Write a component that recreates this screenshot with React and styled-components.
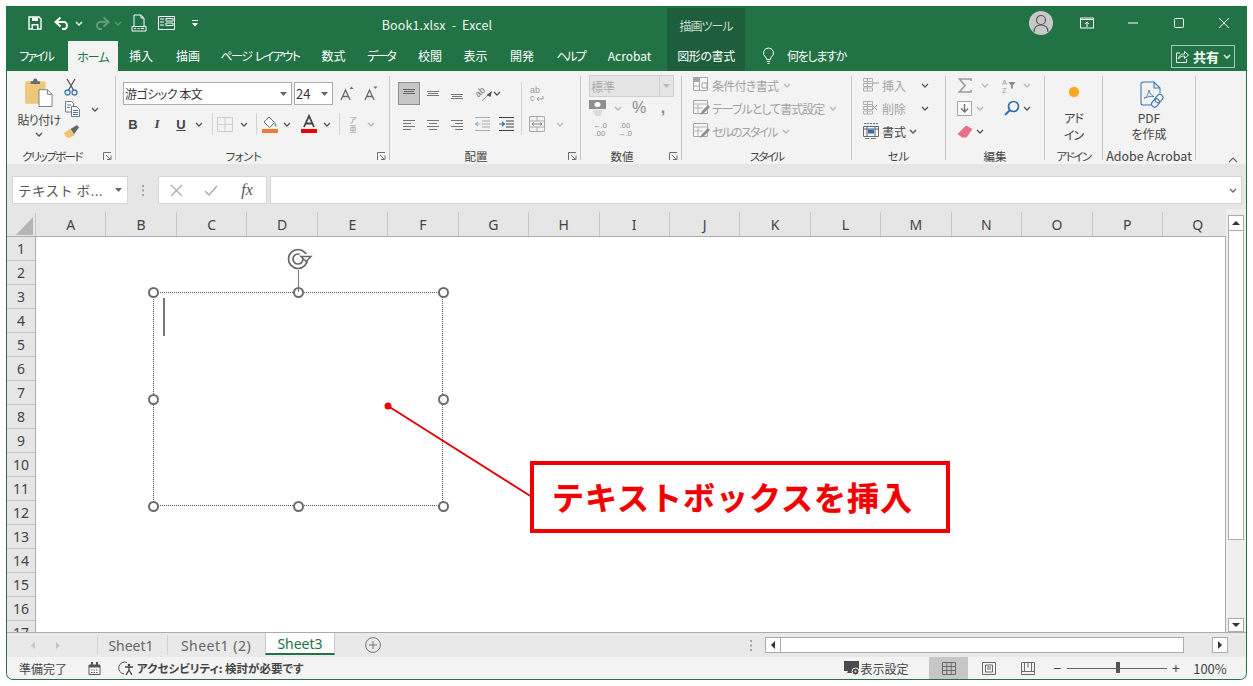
import React from 'react';
import styled, { createGlobalStyle } from 'styled-components';

const Global = createGlobalStyle`
  html, body { margin: 0; padding: 0; background: #fff; }
  body {
    font-family: "Noto Sans CJK JP", "Noto Sans", "Liberation Sans", sans-serif;
    font-feature-settings: "palt";
    color: #444;
    font-size: 12px;
  }
  svg { display: block; overflow: visible; }
`;

const Window = styled.div`
  margin: 6px 0 0 6px;
  width: 1241px;
  height: 674px;
  box-sizing: border-box;
  border: 1px solid #217346;
  border-top: none;
  border-radius: 0 0 7px 7px;
  overflow: hidden;
  display: flex;
  flex-direction: column;
  background: #e6e6e6;
`;

/* a cell of fixed width that centres its icon or text, margin is the gap to the previous one */
const Slot = styled.div`
  flex: none;
  width: ${p => p.$w}px;
  margin-left: ${p => p.$ml || 0}px;
  display: flex;
  align-items: center;
  justify-content: center;
  white-space: nowrap;
`;

const TitleBar = styled.div`
  height: 34px;
  flex: none;
  background: #217346;
  display: flex;
  align-items: center;
  color: #fff;
`;
const DocTitle = styled(Slot)`
  font-size: 12.5px;
  color: #eef5f1;
  word-spacing: 3px;
  letter-spacing: 0.15px;
  margin-top: 3px;
`;
const ToolTitle = styled(Slot)`
  align-self: stretch;
  margin-top: 2px;
  padding-top: 2px;
  background: #1d5f3b;
  color: #c9dcd1;
  font-size: 12px;
  letter-spacing: -1px;
`;
const Avatar = styled.div`
  width: 24px;
  height: 24px;
  margin-left: auto;
  border-radius: 50%;
  background: #c8c8c8;
  display: flex;
  align-items: center;
  justify-content: center;
  overflow: hidden;
`;

const TabBar = styled.div`
  height: 31px;
  flex: none;
  background: #217346;
  display: flex;
  align-items: stretch;
  color: #fff;
  font-size: 12px;
`;
const Tab = styled(Slot)`
  background: ${p => (p.$active ? '#f3f3f3' : p.$dark ? '#1d5f3b' : 'transparent')};
  color: ${p => (p.$active ? '#217346' : '#fff')};
  margin-top: ${p => (p.$active ? 1 : 0)}px;
  letter-spacing: ${p => p.$ls || 0}px;
  word-spacing: 2px;
`;
const ShareButton = styled.div`
  margin: 5px 11px 3px auto;
  width: 64px;
  box-sizing: border-box;
  border: 1px solid #a9c9b7;
  display: flex;
  align-items: center;
  justify-content: center;
  gap: 4px;
  font-weight: 700;
  font-size: 13px;
`;

const Ribbon = styled.div`
  height: 93px;
  flex: none;
  box-sizing: border-box;
  padding: 5px 0 4px;
  background: #f3f3f3;
  display: flex;
`;
const Group = styled.div`
  flex: none;
  width: ${p => p.$w}px;
  box-sizing: border-box;
  border-right: 1px solid #c4c4c4;
  display: flex;
  flex-direction: column;
`;
const GroupBody = styled.div`
  flex: 1;
  min-height: 0;
  display: flex;
  flex-direction: ${p => p.$dir || 'column'};
  align-items: ${p => p.$align || 'stretch'};
`;
const GroupLabel = styled.div`
  height: 14px;
  margin-bottom: -3px;
  display: flex;
  align-items: center;
  font-size: ${p => p.$size || 11.5}px;
  letter-spacing: ${p => p.$ls || 0}px;
  line-height: 14px;
  color: #444;
  white-space: nowrap;
`;
const LabelText = styled.div`
  flex: 1;
  text-align: center;
`;
const Launcher = styled.div`
  width: 18px;
  flex: none;
  display: flex;
  justify-content: flex-end;
  padding-right: 3px;
  box-sizing: border-box;
`;
const Row = styled.div`
  display: flex;
  align-items: center;
  flex: none;
  height: ${p => p.$h}px;
  margin-top: ${p => p.$mt || 0}px;
  margin-left: ${p => p.$ml || 0}px;
`;
const Col = styled.div`
  display: flex;
  flex-direction: column;
  flex: none;
  width: ${p => (p.$w ? p.$w + 'px' : 'auto')};
  margin-left: ${p => p.$ml || 0}px;
  align-items: ${p => p.$align || 'stretch'};
`;
const ComboBox = styled.div`
  flex: none;
  box-sizing: border-box;
  width: ${p => p.$w}px;
  margin-left: ${p => p.$ml || 0}px;
  height: 23px;
  background: #fff;
  border: 1px solid #ababab;
  display: flex;
  align-items: center;
  justify-content: space-between;
  padding: 0 4px 0 1px;
  font-size: ${p => p.$size || 12}px;
  letter-spacing: ${p => p.$ls || 0}px;
  color: #333;
  white-space: nowrap;
`;
const ActiveToggle = styled(Slot)`
  height: 23px;
  box-sizing: border-box;
  background: #c6c6c6;
  border: 1px solid #8f8f8f;
`;
const RowSep = styled.div`
  flex: none;
  width: 1px;
  height: ${p => p.$h || 22}px;
  background: #d2d2d2;
  margin-left: ${p => p.$ml || 0}px;
`;
const FmtLetter = styled(Slot)`
  font-family: ${p => (p.$serif ? '"Liberation Serif", serif' : '"Liberation Sans", sans-serif')};
  font-weight: 700;
  font-style: ${p => (p.$italic ? 'italic' : 'normal')};
  text-decoration: ${p => (p.$under ? 'underline' : 'none')};
  font-size: 13px;
  color: #444;
`;
const NumberSelect = styled.div`
  margin: -1px 0 0 8px;
  width: 85px;
  height: 22px;
  flex: none;
  box-sizing: border-box;
  background: #e5e5e5;
  border: 1px solid #cfcfcf;
  color: #ababab;
  display: flex;
  align-items: center;
  justify-content: space-between;
  font-size: 12px;
  padding-left: 1px;
`;
const SelectArrow = styled.div`
  width: 13px;
  align-self: stretch;
  border-left: 1px solid #cfcfcf;
  display: flex;
  align-items: center;
  justify-content: center;
`;
const Glyph = styled(Slot)`
  font-family: "Liberation Sans", sans-serif;
  font-size: ${p => p.$size || 15}px;
  font-weight: ${p => (p.$bold ? 700 : 400)};
  color: #8a8a8a;
`;
const Phonetic = styled(Slot)`
  flex-direction: column;
  font-size: 7.5px;
  line-height: 9px;
  color: #a0a0a0;
`;
const TinyNum = styled(Slot)`
  flex-direction: column;
  font-family: "Liberation Sans", sans-serif;
  font-size: 7.5px;
  line-height: 8px;
  color: #8e8e8e;
`;
const ListItem = styled.div`
  display: flex;
  align-items: center;
  height: 22px;
  margin-top: ${p => p.$mt || 0}px;
  padding-left: ${p => p.$pl}px;
  color: ${p => (p.$dim ? '#a3a3a3' : '#444')};
  font-size: 12px;
  white-space: nowrap;
`;
const ItemText = styled.span`
  margin-left: ${p => p.$ml || 2}px;
  margin-right: ${p => p.$mr || 0}px;
  width: ${p => (p.$w ? p.$w + 'px' : 'auto')};
  letter-spacing: ${p => p.$ls || 0}px;
  flex: none;
`;
const BigLabel = styled.div`
  font-size: 12px;
  line-height: ${p => p.$lh || 16}px;
  letter-spacing: ${p => p.$ls || 0}px;
  text-align: center;
  color: #444;
  white-space: nowrap;
  margin-top: ${p => p.$mt || 0}px;
`;
const OrangeDot = styled.div`
  width: 10px;
  height: 10px;
  border-radius: 50%;
  background: #f7a823;
  box-shadow: 0 0 2px #f9c56c;
  margin-top: 11px;
`;
const Collapse = styled.div`
  margin: auto 8px -3px auto;
`;

const FormulaBar = styled.div`
  height: 45px;
  flex: none;
  box-sizing: border-box;
  padding: 12px 0 5px 5px;
  background: #e6e6e6;
  display: flex;
  align-items: stretch;
`;
const NameBox = styled.div`
  width: 116px;
  flex: none;
  box-sizing: border-box;
  background: #fff;
  border: 1px solid #d4d4d4;
  display: flex;
  align-items: center;
  justify-content: space-between;
  padding: 0 5px 0 5px;
  font-size: 13.5px;
  font-feature-settings: normal;
  letter-spacing: 0.4px;
  color: #555;
  white-space: nowrap;
`;
const FxBox = styled.div`
  width: 109px;
  flex: none;
  margin-left: 14px;
  box-sizing: border-box;
  background: #fff;
  border: 1px solid #d4d4d4;
  display: flex;
  align-items: center;
`;
const FxLetter = styled(Slot)`
  font-family: "Liberation Serif", serif;
  font-style: italic;
  font-size: 16px;
  color: #555;
`;
const FormulaInput = styled.div`
  width: 972px;
  flex: none;
  margin-left: 3px;
  box-sizing: border-box;
  background: #fff;
  border: 1px solid #d4d4d4;
  display: flex;
  align-items: center;
  justify-content: flex-end;
  padding-right: 4px;
`;

const Main = styled.div`
  height: 423px;
  flex: none;
  display: flex;
`;
const SheetArea = styled.div`
  flex: 1;
  min-width: 0;
  display: flex;
  flex-direction: column;
`;
const ColHeader = styled.div`
  height: 28px;
  flex: none;
  box-sizing: border-box;
  display: flex;
  overflow: hidden;
  border-bottom: 1px solid #ababab;
  background: #e6e6e6;
`;
const Corner = styled.div`
  width: 29px;
  flex: none;
  box-sizing: border-box;
  border-right: 1px solid #c6c6c6;
  margin-top: 4px;
  padding: 4px 3px 1px 9px;
`;
const ColCell = styled.div`
  width: 70.45px;
  flex: none;
  box-sizing: border-box;
  border-right: 1px solid #c6c6c6;
  margin-top: 3px;
  display: flex;
  align-items: center;
  justify-content: center;
  font-family: "Noto Sans", sans-serif;
  font-size: 14px;
  color: #444;
`;
const SheetBody = styled.div`
  flex: 1;
  min-height: 0;
  display: flex;
`;
const RowHeader = styled.div`
  width: 29px;
  flex: none;
  overflow: hidden;
  box-sizing: border-box;
  border-right: 1px solid #ababab;
`;
const RowCell = styled.div`
  height: 24px;
  flex: none;
  box-sizing: border-box;
  border-bottom: 1px solid #c6c6c6;
  display: flex;
  align-items: center;
  justify-content: center;
  font-family: "Noto Sans", sans-serif;
  font-size: 14px;
  color: #444;
`;
const Canvas = styled.div`
  flex: 1;
  min-width: 0;
  position: relative;
  background: #fff;
  border-right: 1px solid #ababab;
`;
const TextBox = styled.div`
  position: absolute;
  left: 117px;
  top: 55px;
  width: 290px;
  height: 214px;
`;
const TextBoxFrame = styled.div`
  position: absolute;
  inset: 0;
  border: 1px dotted #555;
`;
const Handle = styled.div`
  position: absolute;
  left: ${p => p.$x}%;
  top: ${p => p.$y}%;
  width: 11px;
  height: 11px;
  margin: -5.5px 0 0 -5.5px;
  border: 2px solid #6b6b6b;
  border-radius: 50%;
  background: #fff;
  box-sizing: border-box;
`;
const Caret = styled.div`
  position: absolute;
  left: 10px;
  top: 6px;
  width: 1.5px;
  height: 38px;
  background: #777;
`;
const RotateHandle = styled.div`
  position: absolute;
  left: 132px;
  top: -44px;
`;
const Overlay = styled.svg`
  position: absolute;
  left: 0;
  top: 0;
  pointer-events: none;
`;
const Callout = styled.div`
  position: absolute;
  left: 494px;
  top: 224px;
  width: 420px;
  height: 72px;
  box-sizing: border-box;
  border: 4px solid #f00000;
  background: #fff;
  color: #f00000;
  font-size: 32px;
  font-weight: 700;
  font-feature-settings: normal;
  letter-spacing: 1px;
  -webkit-text-stroke: 0.3px #f00000;
  white-space: nowrap;
  display: flex;
  align-items: center;
  padding: 0 0 2px 18px;
`;
const VScroll = styled.div`
  width: 20px;
  flex: none;
  display: flex;
  flex-direction: column;
  align-items: center;
  padding-top: 6px;
  box-sizing: border-box;
  background: #efefef;
`;
const ScrollBtn = styled.div`
  width: 16px;
  height: ${p => p.$h || 16}px;
  flex: none;
  box-sizing: border-box;
  background: #fff;
  border: 1px solid #ababab;
  display: flex;
  align-items: center;
  justify-content: center;
  margin-left: ${p => p.$ml || 0}px;
`;
const VThumb = styled.div`
  width: 16px;
  height: 309px;
  flex: none;
  margin-bottom: 78px;
  box-sizing: border-box;
  background: #fff;
  border: 1px solid #ababab;
  border-top: none;
`;

const SheetStrip = styled.div`
  height: 25px;
  flex: none;
  box-sizing: border-box;
  border-top: 1px solid #ababab;
  background: #e9e9e9;
  display: flex;
  align-items: center;
  font-size: 14px;
  font-family: "Noto Sans", sans-serif;
`;
const SheetTab = styled(Slot)`
  color: ${p => (p.$active ? '#217346' : '#666')};
  letter-spacing: ${p => p.$ls || 0}px;
  ${p => p.$active && `
    align-self: stretch;
    background: #fff;
    margin-bottom: 2px;
    border-bottom: 2px solid #217346;
    border-left: 1px solid #c6c6c6;
    border-right: 1px solid #c6c6c6;
    box-sizing: border-box;
  `}
`;
const HTrack = styled.div`
  width: 403px;
  height: 16px;
  flex: none;
  box-sizing: border-box;
  background: #fff;
  border: 1px solid #ababab;
  border-left: none;
`;
const StatusBar = styled.div`
  height: 22px;
  flex: none;
  background: #f3f3f3;
  display: flex;
  align-items: stretch;
  font-size: 12px;
  color: #444;
`;
const StatusItem = styled(Slot)`
  font-weight: ${p => (p.$bold ? 700 : 400)};
  justify-content: ${p => (p.$left ? 'flex-start' : 'center')};
  margin-left: ${p => (p.$auto ? 'auto' : (p.$ml || 0) + 'px')};
  background: ${p => (p.$active ? '#c6c6c6' : 'transparent')};
  font-size: ${p => p.$size || 12}px;
`;
const ZoomSlider = styled(Slot)`
  position: relative;
`;
const ZoomLine = styled.div`
  width: 100%;
  height: 1px;
  background: #666;
`;
const ZoomThumb = styled.div`
  position: absolute;
  left: 49px;
  top: 50%;
  width: 4px;
  height: 11px;
  margin-top: -6px;
  background: #555;
`;

const Chev = ({ c = '#555' }) => (
  <svg width="8" height="5" viewBox="0 0 8 5"><path d="M1 1l3 3 3-3" fill="none" stroke={c} strokeWidth="1.3" /></svg>
);
const Tri = ({ c = '#555' }) => (
  <svg width="7" height="4" viewBox="0 0 7 4"><path d="M0 0h7L3.5 4z" fill={c} /></svg>
);
const Lines = ({ kind, c = '#777' }) => {
  const rows = {
    top: [[1, 13, 2], [2, 12, 4], [1, 13, 6]],
    mid: [[1, 13, 4], [2, 12, 6], [1, 13, 8]],
    bot: [[1, 13, 7], [2, 12, 9], [1, 13, 11]],
    left: [[1, 13, 2], [1, 9, 5], [1, 13, 8], [1, 9, 11]],
    center: [[1, 13, 2], [3, 11, 5], [1, 13, 8], [3, 11, 11]],
    right: [[1, 13, 2], [5, 13, 5], [1, 13, 8], [5, 13, 11]],
  }[kind];
  return (
    <svg width="14" height="13" viewBox="0 0 14 13">
      {rows.map((r, i) => <path key={i} d={`M${r[0]} ${r[2] + 0.5}H${r[1]}`} stroke={c} strokeWidth="1" />)}
    </svg>
  );
};
const SaveIcon = () => (
  <svg width="16" height="16" viewBox="0 0 16 16"><path d="M2 2h10l2 2v10H2z" fill="none" stroke="#fff" strokeWidth="1.4" /><path d="M5 2.5h6v3.5H5zM4.500 9h7v5h-7z" fill="#fff" /><path d="M6 10.500h4v3.500H6z" fill="#217346" /></svg>
);
const UndoIcon = ({ c = '#fff' }) => (
  <svg width="18" height="13" viewBox="0 0 18 13"><path d="M2 5h9a4 4 0 0 1 0 7H8" fill="none" stroke={c} strokeWidth="2" /><path d="M6.500 0.500L1.500 5l5 4.500" fill="none" stroke={c} strokeWidth="2" /></svg>
);
const RedoIcon = () => (
  <svg width="18" height="13" viewBox="0 0 18 13"><path d="M16 5H7a4 4 0 0 0 0 7h3" fill="none" stroke="#5f9d7d" strokeWidth="2" /><path d="M11.500 0.500l5 4.500-5 4.500" fill="none" stroke="#5f9d7d" strokeWidth="2" /></svg>
);
const PrintPreview = () => (
  <svg width="16" height="18" viewBox="0 0 16 18"><path d="M3 12V1h7l3 3v8M10 1v3h3" fill="none" stroke="#fff" /><path d="M1 12.500h14v4.500H1z" fill="none" stroke="#fff" /><path d="M3 14.500h2M6.500 14.500h2M10 14.500h3" stroke="#fff" /></svg>
);
const FormIcon = () => (
  <svg width="18" height="14" viewBox="0 0 18 14"><path d="M.5.500h16v13H.500z" fill="none" stroke="#fff" /><path d="M2 3h4M2 6h4M2 9h4M8 2.500h7v2.500H8zM8 7h7v2.500H8z" fill="none" stroke="#fff" /></svg>
);
const QatDrop = () => (
  <svg width="6" height="7" viewBox="0 0 6 7"><path d="M0 0.500h6" stroke="#fff" /><path d="M0 3h6L3 6.500z" fill="#fff" /></svg>
);
const UserIcon = () => (
  <svg width="16" height="18" viewBox="0 0 16 18"><circle cx="8" cy="6" r="4.500" fill="none" stroke="#555" strokeWidth="1.200" /><path d="M1 18c0-5 3-7 7-7s7 2 7 7" fill="none" stroke="#555" strokeWidth="1.200" /></svg>
);
const RibbonDisplay = () => (
  <svg width="14" height="12" viewBox="0 0 14 12"><path d="M.500 1h13v10H.500zM.500 2.500h13" fill="none" stroke="#fff" /><path d="M7 10V5M5 7l2-2 2 2" fill="none" stroke="#fff" /></svg>
);
const WinBtn = ({ kind }) => (
  <svg width="12" height="12" viewBox="0 0 12 12">
    {kind === 'min' && <path d="M1 6h10" stroke="#fff" />}
    {kind === 'max' && <rect x="1.500" y="1.500" width="9" height="9" rx="1" fill="none" stroke="#fff" />}
    {kind === 'close' && <path d="M1 1l10 10M11 1L1 11" stroke="#fff" />}
  </svg>
);
const Bulb = () => (
  <svg width="13" height="17" viewBox="0 0 13 17"><path d="M6.500 1a5 5 0 0 0-3 9c.8.700 1 1.500 1.200 2.500h3.600c.2-1 .4-1.800 1.200-2.500a5 5 0 0 0-3-9z" fill="none" stroke="#fff" /><path d="M5 14.500h3M5.500 16.500h2" stroke="#fff" /></svg>
);
const ShareIcon = () => (
  <svg width="14" height="14" viewBox="0 0 14 14"><path d="M5 3H1.500v9.500h10V9" fill="none" stroke="#fff" /><path d="M3.500 9c.5-4 3-5 6-5V1.500l4 3.500-4 3.500V6c-2.500 0-4.500.5-6 3z" fill="none" stroke="#fff" strokeWidth=".9" /></svg>
);
const PasteIcon = () => (
  <svg width="28" height="29" viewBox="0 0 30 30">
    <rect x="0" y="3" width="22" height="24" rx="1.500" fill="#eec77d" />
    <path d="M6 3h2.500c.3-2 1-3 2.500-3s2.300 1 2.500 3H16v3H6z" fill="#6d6d6d" />
    <path d="M15 12h9l5 5v13H15z" fill="#fff" stroke="#7b7b7b" />
    <path d="M24 12v5h5" fill="none" stroke="#7b7b7b" />
  </svg>
);
const ScissorsIcon = () => (
  <svg width="14" height="18" viewBox="0 0 14 18"><path d="M3 1l6.500 11M11 1L4.500 12" stroke="#555" strokeWidth="1.300" fill="none" /><circle cx="3.500" cy="14.500" r="2.500" fill="none" stroke="#3e76b0" strokeWidth="1.300" /><circle cx="10.500" cy="14.500" r="2.500" fill="none" stroke="#3e76b0" strokeWidth="1.300" /></svg>
);
const CopyIcon = () => (
  <svg width="15" height="16" viewBox="0 0 15 16"><path d="M.500.500h6l2 2V11H.500z" fill="#fff" stroke="#777" /><path d="M6.500 5.500h5l3 3v7h-8z" fill="#fff" stroke="#777" /><path d="M2 4h4M2 6.500h3M8 9.500h5M8 11.500h5M8 13.500h5" stroke="#3e76b0" /></svg>
);
const BrushIcon = () => (
  <svg width="16" height="14" viewBox="0 0 16 14"><path d="M0 8l6-4 5 6-6 3c-2 .5-4-2.500-5-5z" fill="#efc26e" /><path d="M6.500 4L13 0l2 2.500-5 6.500z" fill="#666" /></svg>
);
const LauncherIcon = () => (
  <svg width="9" height="9" viewBox="0 0 9 9"><path d="M.500 8V.500H8M3 3l4.500 4.500M4 7.500h4V3.500" fill="none" stroke="#6f6f6f" /></svg>
);
const BorderIcon = () => (
  <svg width="16" height="15" viewBox="0 0 16 15"><path d="M.500.500h15v14H.500zM8 .500v14M.500 7.500h15" fill="none" stroke="#cdcdcd" /></svg>
);
const FillIcon = () => (
  <svg width="18" height="18" viewBox="0 0 18 18"><path d="M3 7l5-5 5.500 5.500-5 5z" fill="#fff" stroke="#666" /><path d="M14 8c1.500 1.500 2 3 1 3.500S13 10 14 8z" fill="#4a90c4" /><path d="M1 14h16v4H1z" fill="#ed7d31" /></svg>
);
const FontColorIcon = () => (
  <svg width="16" height="18" viewBox="0 0 16 18"><path d="M3 12L8 1l5 11M5 8.500h6" fill="none" stroke="#444" strokeWidth="1.800" /><path d="M0 14h16v4H0z" fill="#f00000" /></svg>
);
const GrowA = ({ up }) => (
  <svg width="14" height="15" viewBox="0 0 14 15"><path d="M1 14L5.500 4 10 14M3 10.500h5" fill="none" stroke="#666" strokeWidth="1.300" /><path d={up ? 'M9.500 3l2-2.500 2 2.500z' : 'M9.500.5h4l-2 2.500z'} fill="#3f78b2" /></svg>
);
const OrientIcon = () => (
  <svg width="18" height="16" viewBox="0 0 18 16">
    <text x="1" y="10" fontFamily="Liberation Sans" fontSize="9" fill="#666" transform="rotate(-40 4 8)">ab</text>
    <path d="M3 12l9-9" stroke="#888" transform="translate(4 3)" />
    <path d="M17 5l-1.500 6-4-2z" fill="#555" />
  </svg>
);
const WrapIcon = () => (
  <svg width="16" height="18" viewBox="0 0 16 18">
    <text x="1" y="7.500" fontFamily="Liberation Sans" fontSize="9" fill="#9a9a9a">ab</text>
    <text x="1" y="16" fontFamily="Liberation Sans" fontSize="9" fill="#9a9a9a">c</text>
    <path d="M14 11v3H8m2-2l-2 2 2 2" fill="none" stroke="#9a9a9a" />
  </svg>
);
const IndentIcon = ({ dir, c, active }) => (
  <svg width="16" height="14" viewBox="0 0 16 14">
    <path d="M1 .500h15M8 4h8M8 7h8M8 10h8M1 13.500h15" stroke={active ? '#444' : '#aaa'} />
    <path d={dir > 0 ? 'M1 7h5M4 5l2.500 2L4 9' : 'M6.500 7h-5M4 5L1.500 7 4 9'} fill="none" stroke={c} strokeWidth="1.200" />
  </svg>
);
const MergeIcon = () => (
  <svg width="16" height="16" viewBox="0 0 16 16"><path d="M.500.500h15v15H.500zM.500 5h15M.500 11h15M8 .500V5M8 11v4.500" fill="none" stroke="#aaa" /><path d="M3 8h10M5 6.500L3 8l2 1.500M11 6.500L13 8l-2 1.500" fill="none" stroke="#888" /></svg>
);
const CurrencyIcon = () => (
  <svg width="18" height="17" viewBox="0 0 18 17"><path d="M0 0h17v9H0z" fill="#8f8f8f" /><ellipse cx="8.500" cy="4.500" rx="3" ry="2.500" fill="#fff" /><path d="M4 11h10M5 13h8M6 15h6" stroke="#c6c6c6" /></svg>
);
const StyleIcon = ({ kind }) => (
  <svg width="17" height="16" viewBox="0 0 17 16">
    <path d="M.500.500h14v13H.500z" fill="#f6f6f6" stroke="#a6a6a6" />
    {kind === 'cond' ? (
      <path d="M.500 4.500h6M.500 9h6M6.500.500v13M9 6h5v5H9z" fill="none" stroke="#a6a6a6" />
    ) : (
      <path d="M.500 4h14M.500 8h9M5 4v9" fill="none" stroke="#b5b5b5" />
    )}
    {kind !== 'cond' && <path d="M7 15l2-4 6-6 2 2-6 6z" fill="#8f8f8f" />}
    {kind === 'cond' && <path d="M.500 .500h6v4h-6z" fill="#a6a6a6" />}
  </svg>
);
const CellIcon = ({ kind }) => (
  <svg width="17" height="16" viewBox="0 0 17 16">
    {kind === 'format' ? (
      <>
        <path d="M.500 3.500h15v10H.500zM.500 6h15M4 3.500v10M12 3.500v10" fill="none" stroke="#6b6b6b" />
        <path d="M1 .500h14" stroke="#3e76b0" strokeDasharray="2 1" />
        <path d="M5 6.500h6v4H5z" fill="#2f6fb0" />
        <path d="M2 15.500h4M8 15.500h5" stroke="#777" />
      </>
    ) : (
      <>
        <path d="M.500 1.500h9v3h-9zM.500 6.500h9v3h-9zM.500 11h9v3h-9zM4.500 1.500v12" fill="none" stroke="#b0b0b0" />
        {kind === 'del'
          ? <path d="M9 5l5 5M14 5l-5 5" stroke="#9a9a9a" />
          : <path d="M9 6h7" stroke="#9a9a9a" />}
      </>
    )}
  </svg>
);
const SigmaIcon = () => (
  <svg width="14" height="15" viewBox="0 0 14 15"><path d="M13 3V1H1.500l5.500 6.500L1.500 14H13v-2" fill="none" stroke="#9a9a9a" strokeWidth="1.600" /></svg>
);
const SortIcon = () => (
  <svg width="14" height="15" viewBox="0 0 14 15">
    <text x="0" y="6.500" fontFamily="Liberation Sans" fontSize="7.500" fill="#9a9a9a">A</text>
    <text x="0" y="14.500" fontFamily="Liberation Sans" fontSize="7.500" fill="#9a9a9a">Z</text>
    <path d="M6.500 4h7L10.800 7.500V11L9 10V7.500z" fill="#8a8a8a" />
  </svg>
);
const FillDownIcon = () => (
  <svg width="15" height="15" viewBox="0 0 15 15"><path d="M.500.500h14v14H.500z" fill="#fafafa" stroke="#a6a6a6" /><path d="M7.500 3v8M4 7.500l3.500 3.500L11 7.500" fill="none" stroke="#777" strokeWidth="1.500" /></svg>
);
const FindIcon = () => (
  <svg width="16" height="16" viewBox="0 0 16 16"><circle cx="9.500" cy="6.500" r="5" fill="none" stroke="#2f6fb0" strokeWidth="1.700" /><path d="M6 10l-5 5" stroke="#2f6fb0" strokeWidth="2" /></svg>
);
const EraserIcon = () => (
  <svg width="16" height="13" viewBox="0 0 16 13"><path d="M9 .500L15.500 4l-6 8.500H5L.500 9z" fill="#e8718a" /></svg>
);
const AcrobatIcon = () => (
  <svg width="26" height="28" viewBox="0 0 26 28" fill="none" stroke="#3e76b0" strokeWidth="1.100">
    <path d="M11 24H3a2 2 0 0 1-2-2V3a2 2 0 0 1 2-2h11l6 6v5" />
    <path d="M14 1v6h6" />
    <path d="M4 17c2 0 4-3 5-8 .5 3 2.500 6 5 6.500-3-.5-7 .500-10 1.500z" strokeWidth=".9" />
    <rect x="16" y="13" width="6" height="9" rx="3" transform="rotate(40 19 17.500)" />
    <rect x="12.500" y="17.500" width="6" height="9" rx="3" transform="rotate(40 15.500 22)" />
  </svg>
);
const XMark = () => (
  <svg width="13" height="13" viewBox="0 0 13 13"><path d="M1 1l11 11M12 1L1 12" stroke="#ababab" strokeWidth="1.300" /></svg>
);
const CheckMark = () => (
  <svg width="14" height="11" viewBox="0 0 14 11"><path d="M1 6l4 4 8-9" fill="none" stroke="#ababab" strokeWidth="1.500" /></svg>
);
const Dots = ({ c = '#a6a6a6' }) => (
  <svg width="2" height="11" viewBox="0 0 2 11"><path d="M0 0h2v2H0zM0 4.500h2v2H0zM0 9h2v2H0z" fill={c} /></svg>
);
const ArrowBtn = ({ dir }) => (
  <svg width="8" height="8" viewBox="0 0 8 8">
    {dir === 'up' && <path d="M0 6h8L4 2z" fill="#333" />}
    {dir === 'down' && <path d="M0 2h8L4 6z" fill="#333" />}
    {dir === 'left' && <path d="M6 0v8L2 4z" fill="#333" />}
    {dir === 'right' && <path d="M2 0v8l4-4z" fill="#333" />}
  </svg>
);
const PlusCircle = () => (
  <svg width="16" height="16" viewBox="0 0 16 16"><circle cx="8" cy="8" r="7.400" fill="none" stroke="#777" /><path d="M8 4v8M4 8h8" stroke="#777" /></svg>
);
const MacroIcon = () => (
  <svg width="13" height="13" viewBox="0 0 13 13"><path d="M1 3h11v9.500H1z" fill="#fff" stroke="#555" /><path d="M1 3h11v2.500H1zM3 0h2v3H3zM8 0h2v3H8z" fill="#555" /><path d="M3 8h7M3 10.500h7" stroke="#555" strokeDasharray="1.500 1" /></svg>
);
const AccessIcon = () => (
  <svg width="16" height="15" viewBox="0 0 16 15"><path d="M5 13A6 6 0 1 1 8 1.500" fill="none" stroke="#555" /><circle cx="10" cy="4" r="1.300" fill="#444" /><path d="M6 6h8M10 6v3l-3 5M10 9l3 5" fill="none" stroke="#444" strokeWidth="1.300" /></svg>
);
const DisplayIcon = () => (
  <svg width="16" height="15" viewBox="0 0 16 15"><path d="M0 0h15v10H9v2H3l1-2H0z" fill="#4a4a4a" /><circle cx="11.500" cy="10.500" r="3.500" fill="#4a4a4a" stroke="#f3f3f3" /><circle cx="11.500" cy="10.500" r="1" fill="#f3f3f3" /></svg>
);
const ViewIcon = ({ kind }) => (
  <svg width="14" height="13" viewBox="0 0 14 13">
    {kind === 'normal' && <path d="M.500.500h13v12H.500zM.500 4.500h13M.500 8.500h13M4.800.500v12M9.200.500v12" fill="none" stroke="#6b6b6b" />}
    {kind === 'page' && <path d="M.500.500h13v12H.500zM3.500 3h7v7h-7zM5 5h4M5 7h4" fill="none" stroke="#6b6b6b" />}
    {kind === 'break' && <path d="M.500.500h13v12H.500zM.500 9.500h13M7 .500v5M3.500.500v9M10.500.500v9" fill="none" stroke="#6b6b6b" />}
  </svg>
);

const Launch = () => <Launcher><LauncherIcon /></Launcher>;
const dimChev = '#b5b5b5';
const columns = 'ABCDEFGHIJKLMNOPQ'.split('');
const rows = Array.from({ length: 17 }, (_, i) => i + 1);
const handles = [[0, 0], [50, 0], [100, 0], [0, 50], [100, 50], [0, 100], [50, 100], [100, 100]];

export default function App() {
  return (
    <>
      <Global />
      <Window>
        <TitleBar>
          <Slot $w={16} $ml={20}><SaveIcon /></Slot>
          <Slot $w={18} $ml={11}><UndoIcon /></Slot>
          <Slot $w={8} $ml={3}><Chev c="#fff" /></Slot>
          <Slot $w={18} $ml={8.5}><RedoIcon /></Slot>
          <Slot $w={8} $ml={4.5}><Chev c="#5f9d7d" /></Slot>
          <Slot $w={16} $ml={9}><PrintPreview /></Slot>
          <Slot $w={18} $ml={11}><FormIcon /></Slot>
          <Slot $w={8} $ml={15}><QatDrop /></Slot>
          <DocTitle $w={114} $ml={181}>Book1.xlsx  -  Excel</DocTitle>
          <ToolTitle $w={78} $ml={173}>描画ツール</ToolTitle>
          <Avatar><UserIcon /></Avatar>
          <Slot $w={16} $ml={26}><RibbonDisplay /></Slot>
          <Slot $w={12} $ml={32}><WinBtn kind="min" /></Slot>
          <Slot $w={12} $ml={34}><WinBtn kind="max" /></Slot>
          <Slot $w={12} $ml={33}><WinBtn kind="close" /></Slot>
          <Slot $w={16} />
        </TitleBar>

        <TabBar>
          <Tab $w={34} $ml={12} $ls={-2}>ファイル</Tab>
          <Tab $w={50} $ml={15} $active $ls={-1}>ホーム</Tab>
          <Tab $w={24} $ml={11}>挿入</Tab>
          <Tab $w={24} $ml={23}>描画</Tab>
          <Tab $w={78} $ml={21} $ls={-1.5}>ページ レイアウト</Tab>
          <Tab $w={25} $ml={22}>数式</Tab>
          <Tab $w={28} $ml={21} $ls={-2}>データ</Tab>
          <Tab $w={24} $ml={23}>校閲</Tab>
          <Tab $w={25} $ml={21}>表示</Tab>
          <Tab $w={24} $ml={22}>開発</Tab>
          <Tab $w={29} $ml={22} $ls={-2}>ヘルプ</Tab>
          <Tab $w={45} $ml={22}>Acrobat</Tab>
          <Tab $w={78} $ml={15} $dark $ls={-0.4}>図形の書式</Tab>
          <Slot $w={12} $ml={17}><Bulb /></Slot>
          <Tab $w={59} $ml={13} $ls={-1.3}>何をしますか</Tab>
          <ShareButton><ShareIcon />共有<Chev c="#fff" /></ShareButton>
        </TabBar>

        <Ribbon>
          <Group $w={109}>
            <GroupBody $dir="row">
              <Col $w={46} $ml={9} $align="center">
                <Row $h={32}><PasteIcon /></Row>
                <BigLabel $mt={5} $lh={14} $ls={-0.7}>貼り付け</BigLabel>
                <Row $h={14}><Chev /></Row>
              </Col>
              <Col $w={20}>
                <Row $h={22}><Slot $w={18}><ScissorsIcon /></Slot></Row>
                <Row $h={22}><Slot $w={20}><CopyIcon /></Slot></Row>
                <Row $h={24}><Slot $w={20}><BrushIcon /></Slot></Row>
              </Col>
              <Col $ml={9}>
                <Row $h={22} />
                <Row $h={22}><Slot $w={8}><Chev /></Slot></Row>
              </Col>
            </GroupBody>
            <GroupLabel $ls={-1.6}><LabelText>クリップボード</LabelText><Launch /></GroupLabel>
          </Group>

          <Group $w={274}>
            <GroupBody>
              <Row $h={23} $mt={6}>
                <ComboBox $w={169} $ml={7} $ls={-0.5}>游ゴシック 本文<Tri c="#666" /></ComboBox>
                <ComboBox $w={39} $ml={2} $size={13}><span>24</span><Tri c="#666" /></ComboBox>
                <Slot $w={14} $ml={7}><GrowA up /></Slot>
                <Slot $w={14} $ml={10}><GrowA /></Slot>
              </Row>
              <Row $h={22} $mt={8}>
                <FmtLetter $w={12} $ml={11}>B</FmtLetter>
                <FmtLetter $w={12} $ml={12} $italic $serif>I</FmtLetter>
                <FmtLetter $w={12} $ml={12} $under>U</FmtLetter>
                <Slot $w={8} $ml={8}><Chev /></Slot>
                <RowSep $ml={9} />
                <Slot $w={16} $ml={4}><BorderIcon /></Slot>
                <Slot $w={8} $ml={7}><Chev /></Slot>
                <RowSep $ml={8} />
                <Slot $w={18} $ml={4}><FillIcon /></Slot>
                <Slot $w={8} $ml={4}><Chev /></Slot>
                <Slot $w={16} $ml={10}><FontColorIcon /></Slot>
                <Slot $w={8} $ml={6}><Chev /></Slot>
                <RowSep $ml={8} />
                <Phonetic $w={12} $ml={7}><span>ア</span><span>亜</span></Phonetic>
                <Slot $w={8} $ml={8}><Chev c={dimChev} /></Slot>
              </Row>
            </GroupBody>
            <GroupLabel $ls={-0.5}><LabelText>フォント</LabelText><Launch /></GroupLabel>
          </Group>

          <Group $w={191}>
            <GroupBody $dir="row">
              <Col $w={123} $ml={8}>
                <Row $h={23} $mt={6}>
                  <ActiveToggle $w={22}><Lines kind="top" c="#666" /></ActiveToggle>
                  <Slot $w={14} $ml={6}><Lines kind="mid" /></Slot>
                  <Slot $w={14} $ml={10}><Lines kind="bot" /></Slot>
                  <Slot $w={16} $ml={12}><OrientIcon /></Slot>
                  <Slot $w={8} $ml={1}><Chev /></Slot>
                </Row>
                <Row $h={22} $mt={8}>
                  <Slot $w={14} $ml={4}><Lines kind="left" /></Slot>
                  <Slot $w={14} $ml={10}><Lines kind="center" /></Slot>
                  <Slot $w={14} $ml={10}><Lines kind="right" /></Slot>
                  <Slot $w={16} $ml={10}><IndentIcon dir={-1} c="#9ab5d0" /></Slot>
                  <Slot $w={16} $ml={8}><IndentIcon dir={1} c="#2f6fb0" active /></Slot>
                </Row>
              </Col>
              <Col $w={1}><Row $h={53} $mt={6}><RowSep $h={53} /></Row></Col>
              <Col>
                <Row $h={23} $mt={6}><Slot $w={16} $ml={7}><WrapIcon /></Slot></Row>
                <Row $h={22} $mt={8}>
                  <Slot $w={16} $ml={7}><MergeIcon /></Slot>
                  <Slot $w={8} $ml={11}><Chev c={dimChev} /></Slot>
                </Row>
              </Col>
            </GroupBody>
            <GroupLabel><LabelText>配置</LabelText><Launch /></GroupLabel>
          </Group>

          <Group $w={101}>
            <GroupBody>
              <NumberSelect>標準<SelectArrow><Tri c="#bbb" /></SelectArrow></NumberSelect>
              <Row $h={20} $mt={1}>
                <Slot $w={18} $ml={8}><CurrencyIcon /></Slot>
                <Slot $w={8} $ml={7}><Chev c={dimChev} /></Slot>
                <Glyph $w={14} $ml={10} $size={16}>%</Glyph>
                <Glyph $w={6} $ml={14} $size={16} $bold>,</Glyph>
              </Row>
              <Row $h={18} $mt={3}>
                <TinyNum $w={16} $ml={11}><span>←.0</span><span>.00</span></TinyNum>
                <TinyNum $w={16} $ml={9}><span>.00</span><span>→.0</span></TinyNum>
              </Row>
            </GroupBody>
            <GroupLabel><LabelText>数値</LabelText><Launch /></GroupLabel>
          </Group>

          <Group $w={170}>
            <GroupBody>
              <ListItem $pl={11} $mt={-2} $dim><StyleIcon kind="cond" /><ItemText $mr={5} $ls={-0.7}>条件付き書式</ItemText><Chev c={dimChev} /></ListItem>
              <ListItem $pl={11} $mt={1} $dim><StyleIcon kind="table" /><ItemText $mr={5} $ls={-1}>テーブルとして書式設定</ItemText><Chev c={dimChev} /></ListItem>
              <ListItem $pl={11} $mt={1} $dim><StyleIcon kind="cell" /><ItemText $mr={5} $ls={-1.8}>セルのスタイル</ItemText><Chev c={dimChev} /></ListItem>
            </GroupBody>
            <GroupLabel $ls={-2}><LabelText>スタイル</LabelText></GroupLabel>
          </Group>

          <Group $w={94}>
            <GroupBody>
              <ListItem $pl={11} $mt={-2} $dim><CellIcon kind="ins" /><ItemText $w={24} $mr={15}>挿入</ItemText><Chev /></ListItem>
              <ListItem $pl={11} $mt={1} $dim><CellIcon kind="del" /><ItemText $w={24} $mr={15}>削除</ItemText><Chev /></ListItem>
              <ListItem $pl={11} $mt={1}><CellIcon kind="format" /><ItemText $w={24} $mr={3}>書式</ItemText><Chev /></ListItem>
            </GroupBody>
            <GroupLabel><LabelText>セル</LabelText></GroupLabel>
          </Group>

          <Group $w={99}>
            <GroupBody>
              <Row $h={22} $mt={-2}>
                <Slot $w={14} $ml={12}><SigmaIcon /></Slot>
                <Slot $w={8} $ml={9}><Chev c={dimChev} /></Slot>
                <Slot $w={14} $ml={13}><SortIcon /></Slot>
                <Slot $w={8} $ml={7}><Chev c={dimChev} /></Slot>
              </Row>
              <Row $h={22} $mt={1}>
                <Slot $w={14} $ml={11}><FillDownIcon /></Slot>
                <Slot $w={8} $ml={5}><Chev c={dimChev} /></Slot>
                <Slot $w={16} $ml={20}><FindIcon /></Slot>
                <Slot $w={8} $ml={3}><Chev /></Slot>
              </Row>
              <Row $h={22} $mt={1}>
                <Slot $w={16} $ml={11}><EraserIcon /></Slot>
                <Slot $w={8} $ml={3}><Chev /></Slot>
              </Row>
            </GroupBody>
            <GroupLabel><LabelText>編集</LabelText></GroupLabel>
          </Group>

          <Group $w={58}>
            <GroupBody $align="center">
              <OrangeDot />
              <BigLabel $mt={12} $lh={17} $ls={-1}>アド<br />イン</BigLabel>
            </GroupBody>
            <GroupLabel $ls={-1.5}><LabelText>アドイン</LabelText></GroupLabel>
          </Group>

          <Group $w={93}>
            <GroupBody $align="center">
              <Row $h={30} $mt={4} $ml={8}><AcrobatIcon /></Row>
              <BigLabel $lh={16}>PDF<br />を作成</BigLabel>
            </GroupBody>
            <GroupLabel $size={12.5}><LabelText>Adobe Acrobat</LabelText></GroupLabel>
          </Group>

          <Collapse><svg width="10" height="6" viewBox="0 0 10 6"><path d="M1 5l4-4 4 4" fill="none" stroke="#666" strokeWidth="1.100" /></svg></Collapse>
        </Ribbon>

        <FormulaBar>
          <NameBox>テキスト ボ...<Tri c="#666" /></NameBox>
          <Slot $w={2} $ml={14}><Dots /></Slot>
          <FxBox>
            <Slot $w={13} $ml={11}><XMark /></Slot>
            <Slot $w={14} $ml={21}><CheckMark /></Slot>
            <FxLetter $w={14} $ml={22}>fx</FxLetter>
          </FxBox>
          <FormulaInput><Chev c="#666" /></FormulaInput>
        </FormulaBar>

        <Main>
          <SheetArea>
            <ColHeader>
              <Corner>
                <svg width="17" height="18" viewBox="0 0 17 18"><path d="M17 0v18H0z" fill="#b5b5b5" /></svg>
              </Corner>
              {columns.map(c => <ColCell key={c}>{c}</ColCell>)}
            </ColHeader>
            <SheetBody>
              <RowHeader>
                {rows.map(n => <RowCell key={n}>{n}</RowCell>)}
              </RowHeader>
              <Canvas>
                <TextBox>
                  <TextBoxFrame />
                  <Caret />
                  {handles.map(([x, y]) => <Handle key={`${x}-${y}`} $x={x} $y={y} />)}
                  <RotateHandle>
                    <svg width="30" height="46" viewBox="0 0 30 46">
                      <path d="M13.500 22v22" stroke="#777" />
                      <circle cx="13" cy="11" r="9.500" fill="none" stroke="#666" strokeWidth="1.700" />
                      <circle cx="13" cy="11" r="5" fill="none" stroke="#666" strokeWidth="1.700" />
                      <path d="M14 6h14l-7 8z" fill="#fff" />
                      <path d="M16 8.500h10l-5 5z" fill="#fff" stroke="#666" strokeWidth="1.400" />
                    </svg>
                  </RotateHandle>
                </TextBox>
                <Overlay width="1190" height="395">
                  <line x1="352" y1="169" x2="496" y2="260" stroke="#e00000" strokeWidth="1.800" />
                  <circle cx="352" cy="169" r="3.500" fill="#f00000" />
                </Overlay>
                <Callout>テキストボックスを挿入</Callout>
              </Canvas>
            </SheetBody>
          </SheetArea>
          <VScroll>
            <ScrollBtn $h={16}><ArrowBtn dir="up" /></ScrollBtn>
            <VThumb />
            <ScrollBtn $h={14}><ArrowBtn dir="down" /></ScrollBtn>
          </VScroll>
        </Main>

        <SheetStrip>
          <Slot $w={6} $ml={23}><svg width="4" height="7" viewBox="0 0 4 7"><path d="M4 0v7L0 3.500z" fill="#c4c4c4" /></svg></Slot>
          <Slot $w={6} $ml={19}><svg width="4" height="7" viewBox="0 0 4 7"><path d="M0 0v7l4-3.500z" fill="#c4c4c4" /></svg></Slot>
          <RowSep $ml={36} $h={20} />
          <SheetTab $w={46} $ml={10}>Sheet1</SheetTab>
          <RowSep $ml={13} $h={20} />
          <SheetTab $w={72} $ml={12} $ls={0.5}>Sheet1 (2)</SheetTab>
          <SheetTab $w={70} $ml={13} $active>Sheet3</SheetTab>
          <Slot $w={16} $ml={30}><PlusCircle /></Slot>
          <Slot $w={2} $ml={369}><Dots /></Slot>
          <ScrollBtn $ml={13}><ArrowBtn dir="left" /></ScrollBtn>
          <HTrack />
          <ScrollBtn $ml={28}><ArrowBtn dir="right" /></ScrollBtn>
        </SheetStrip>

        <StatusBar>
          <StatusItem $w={48} $ml={12}>準備完了</StatusItem>
          <StatusItem $w={13} $ml={21}><MacroIcon /></StatusItem>
          <StatusItem $w={16} $ml={18}><AccessIcon /></StatusItem>
          <StatusItem $w={164} $ml={2} $bold $left $size={11.5}>アクセシビリティ: 検討が必要です</StatusItem>
          <StatusItem $w={16} $auto><DisplayIcon /></StatusItem>
          <StatusItem $w={49}>表示設定</StatusItem>
          <StatusItem $w={39} $ml={20} $active><ViewIcon kind="normal" /></StatusItem>
          <StatusItem $w={14} $ml={14}><ViewIcon kind="page" /></StatusItem>
          <StatusItem $w={14} $ml={25}><ViewIcon kind="break" /></StatusItem>
          <StatusItem $w={7} $ml={19} $size={14}>−</StatusItem>
          <ZoomSlider $w={100} $ml={6}><ZoomLine /><ZoomThumb /></ZoomSlider>
          <StatusItem $w={8} $ml={5} $size={14}>+</StatusItem>
          <StatusItem $w={34} $ml={13} $size={13}>100%</StatusItem>
          <Slot $w={19} />
        </StatusBar>
      </Window>
    </>
  );
}
